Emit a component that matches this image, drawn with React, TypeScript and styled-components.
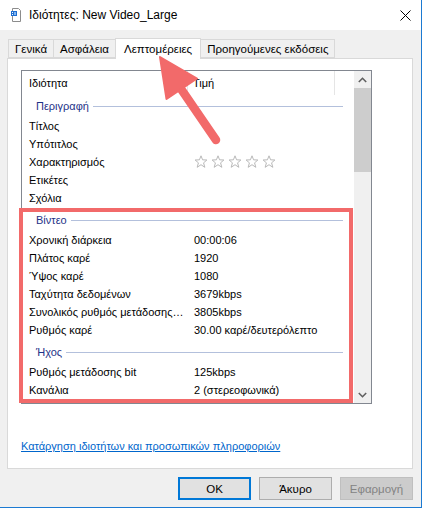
import styled, { createGlobalStyle } from "styled-components"

const GlobalStyle = createGlobalStyle`
  html, body {
    margin: 0;
    padding: 0;
    background: #f0f0f0;
  }
  body {
    font-family: "Liberation Sans", Arial, sans-serif;
    font-size: 11px;
    color: #000;
  }
  * { box-sizing: border-box; }
`

const Window = styled.div`
  position: relative;
  width: 422px;
  height: 508px;
  background: #f0f0f0;
  border-right: 1px solid #1c7ad2;
  border-bottom: 1px solid #1c7ad2;
  display: flex;
  flex-direction: column;
  overflow: hidden;
`

const TitleBar = styled.div`
  height: 30px;
  background: #fff;
  display: flex;
  align-items: center;
  padding-left: 8px;
  gap: 5px;
  font-size: 12px;

  .title {
    flex: 1;
  }
`

const TabStrip = styled.div`
  height: 28px;
  display: flex;
  align-items: flex-end;
  padding-left: 8px;
  position: relative;
  z-index: 1;
  font-size: 11.5px;
`

const Tab = styled.div<{ $active?: boolean }>`
  height: ${p => (p.$active ? "21px" : "19px")};
  margin-bottom: ${p => (p.$active ? "-1px" : "0")};
  margin-left: -1px;
  padding: ${p => (p.$active ? "0 8px 0 8px" : "0 6px")};
  display: flex;
  align-items: center;
  background: ${p => (p.$active ? "#fff" : "#f0f0f0")};
  border: 1px solid #d9d9d9;
  border-bottom: ${p => (p.$active ? "none" : "1px solid #d9d9d9")};
  white-space: nowrap;

  &:first-child {
    margin-left: 0;
  }
`

const Panel = styled.div`
  position: relative;
  margin: 0 8px 0 7px;
  height: 411px;
  background: #fff;
  border: 1px solid #d9d9d9;
  padding: 11px 0 0 13px;
  display: flex;
  flex-direction: column;
`

const ListBox = styled.div`
  width: 351px;
  height: 334px;
  border: 1px solid #828790;
  display: flex;
  overflow: hidden;
`

const ListContent = styled.div`
  flex: 1;
  display: flex;
  flex-direction: column;
  overflow: hidden;
`

const Header = styled.div`
  height: 24px;
  flex-shrink: 0;
  display: flex;
`

const HeaderCell = styled.div<{ $width: number; $pad: number }>`
  width: ${p => p.$width}px;
  padding-left: ${p => p.$pad}px;
  display: flex;
  align-items: center;
  border-right: 1px solid #e5e5e5;
`

const Group = styled.div<{ $top: number }>`
  height: ${p => 22 + p.$top}px;
  padding-top: ${p => p.$top}px;
  flex-shrink: 0;
  display: flex;
  align-items: center;

  .label {
    padding-left: 14px;
    margin-right: 4px;
    color: #1e3287;
  }

  .line {
    flex: 1;
    height: 1px;
    margin-right: 11px;
    background: #b3c0dc;
  }
`

const Row = styled.div`
  height: 18px;
  flex-shrink: 0;
  display: flex;
  align-items: center;
`

const LabelCell = styled.div`
  width: 166px;
  padding-left: 7px;
  padding-right: 2px;
  white-space: nowrap;
  overflow: hidden;
  text-overflow: ellipsis;
`

const ValueCell = styled.div`
  padding-left: 6px;
  display: flex;
  gap: 3px;
  white-space: nowrap;
`

const Scrollbar = styled.div`
  width: 17px;
  background: #f0f0f0;
  display: flex;
  flex-direction: column;

  .thumb {
    height: 84px;
    background: #cdcdcd;
  }

  .rest {
    flex: 1;
  }
`

const ScrollArrow = styled.div`
  height: 17px;
  display: flex;
  align-items: center;
  justify-content: center;
`

const Link = styled.a`
  margin-top: 34px;
  line-height: 16px;
  color: #0066cc;
  text-decoration: underline;
  cursor: pointer;
  align-self: flex-start;
`

const Highlight = styled.div`
  position: absolute;
  left: 11px;
  top: 149px;
  width: 334px;
  height: 195px;
  border: 4px solid #f26a6a;
  pointer-events: none;
`

const ButtonRow = styled.div`
  display: flex;
  justify-content: flex-end;
  gap: 8px;
  padding-right: 8px;
  margin-top: 8px;
`

const Button = styled.button<{ $default?: boolean }>`
  width: 73px;
  height: 23px;
  font: inherit;
  font-size: 11.5px;
  color: #000;
  background: #e1e1e1;
  border: ${p => (p.$default ? "2px solid #0078d7" : "1px solid #adadad")};
  padding: 0;

  &:disabled {
    background: #cccccc;
    border-color: #bfbfbf;
    color: #838383;
  }
`

const Arrow = styled.svg`
  position: absolute;
  left: 150px;
  top: 50px;
  pointer-events: none;
  z-index: 5;
`

const Star = () => (
  <svg width="14" height="14" viewBox="0 0 14 14">
    <path
      d="M7 0.8 L8.59 4.82 L12.9 5 L9.57 7.83 L10.82 12.3 L7 9.7 L3.18 12.3 L4.43 7.83 L1.1 5 L5.41 4.82 Z"
      fill="#fff"
      stroke="#b9b9b9"
      strokeWidth="1"
      strokeLinejoin="round"
    />
  </svg>
)

const FileIcon = () => (
  <svg width="16" height="16" viewBox="0 0 16 16">
    <path d="M4.5 1.5 H10.5 L12.5 3.5 V14.5 H4.5 Z" fill="#fff" stroke="#8c8c8c" />
    <rect x="3" y="4" width="6" height="5" fill="#1f6fd1" />
    <rect x="4" y="5" width="1" height="1" fill="#fff" />
    <rect x="4" y="7" width="1" height="1" fill="#fff" />
    <rect x="6" y="5" width="2" height="3" fill="#7fb4f0" />
  </svg>
)

const CloseIcon = () => (
  <svg width="11" height="11" viewBox="0 0 11 11" style={{ marginRight: 10 }}>
    <path d="M0.5 0.5 L10.5 10.5 M10.5 0.5 L0.5 10.5" stroke="#000" strokeWidth="1" />
  </svg>
)

const Chevron = ({ down }: { down?: boolean }) => (
  <svg width="9" height="6" viewBox="0 0 9 6">
    <path
      d={down ? "M0.8 1 L4.5 4.7 L8.2 1" : "M0.8 5 L4.5 1.3 L8.2 5"}
      fill="none"
      stroke="#606060"
      strokeWidth="1.6"
    />
  </svg>
)

type Item = { label: string; value?: string; stars?: boolean }

const description: Item[] = [
  { label: "Τίτλος" },
  { label: "Υπότιτλος" },
  { label: "Χαρακτηρισμός", stars: true },
  { label: "Ετικέτες" },
  { label: "Σχόλια" },
]

const video: Item[] = [
  { label: "Χρονική διάρκεια", value: "00:00:06" },
  { label: "Πλάτος καρέ", value: "1920" },
  { label: "Ύψος καρέ", value: "1080" },
  { label: "Ταχύτητα δεδομένων", value: "3679kbps" },
  { label: "Συνολικός ρυθμός μετάδοσης bit", value: "3805kbps" },
  { label: "Ρυθμός καρέ", value: "30.00 καρέ/δευτερόλεπτο" },
]

const audio: Item[] = [
  { label: "Ρυθμός μετάδοσης bit", value: "125kbps" },
  { label: "Κανάλια", value: "2 (στερεοφωνικά)" },
]

const Rows = ({ items }: { items: Item[] }) => (
  <>
    {items.map(item => (
      <Row key={item.label}>
        <LabelCell>{item.label}</LabelCell>
        <ValueCell>
          {item.stars ? [0, 1, 2, 3, 4].map(i => <Star key={i} />) : item.value}
        </ValueCell>
      </Row>
    ))}
  </>
)

const GroupHeader = ({ title, top }: { title: string; top: number }) => (
  <Group $top={top}>
    <span className="label">{title}</span>
    <span className="line" />
  </Group>
)

const App = () => {
  return (
    <>
      <GlobalStyle />
      <Window>
        <TitleBar>
          <FileIcon />
          <span className="title">Ιδιότητες: New Video_Large</span>
          <CloseIcon />
        </TitleBar>

        <TabStrip>
          <Tab>Γενικά</Tab>
          <Tab>Ασφάλεια</Tab>
          <Tab $active>Λεπτομέρειες</Tab>
          <Tab>Προηγούμενες εκδόσεις</Tab>
        </TabStrip>

        <Panel>
          <ListBox>
            <ListContent>
              <Header>
                <HeaderCell $width={166} $pad={7}>Ιδιότητα</HeaderCell>
                <HeaderCell $width={147} $pad={5}>Τιμή</HeaderCell>
              </Header>
              <GroupHeader title="Περιγραφή" top={0} />
              <Rows items={description} />
              <GroupHeader title="Βίντεο" top={2} />
              <Rows items={video} />
              <GroupHeader title="Ήχος" top={2} />
              <Rows items={audio} />
            </ListContent>
            <Scrollbar>
              <ScrollArrow><Chevron /></ScrollArrow>
              <div className="thumb" />
              <div className="rest" />
              <ScrollArrow><Chevron down /></ScrollArrow>
            </Scrollbar>
          </ListBox>
          <Link>Κατάργηση ιδιοτήτων και προσωπικών πληροφοριών</Link>
          <Highlight />
        </Panel>

        <ButtonRow>
          <Button $default>OK</Button>
          <Button>Άκυρο</Button>
          <Button disabled>Εφαρμογή</Button>
        </ButtonRow>

        <Arrow width="80" height="100" viewBox="0 0 80 100">
          <line x1="29" y1="36" x2="66" y2="90" stroke="#f26a6a" strokeWidth="8.5" strokeLinecap="round" />
          <path d="M10 7 L47 28.5 L16.5 49 Z" fill="#f26a6a" stroke="#f26a6a" strokeWidth="2" strokeLinejoin="round" />
        </Arrow>
      </Window>
    </>
  )
}

export default App
